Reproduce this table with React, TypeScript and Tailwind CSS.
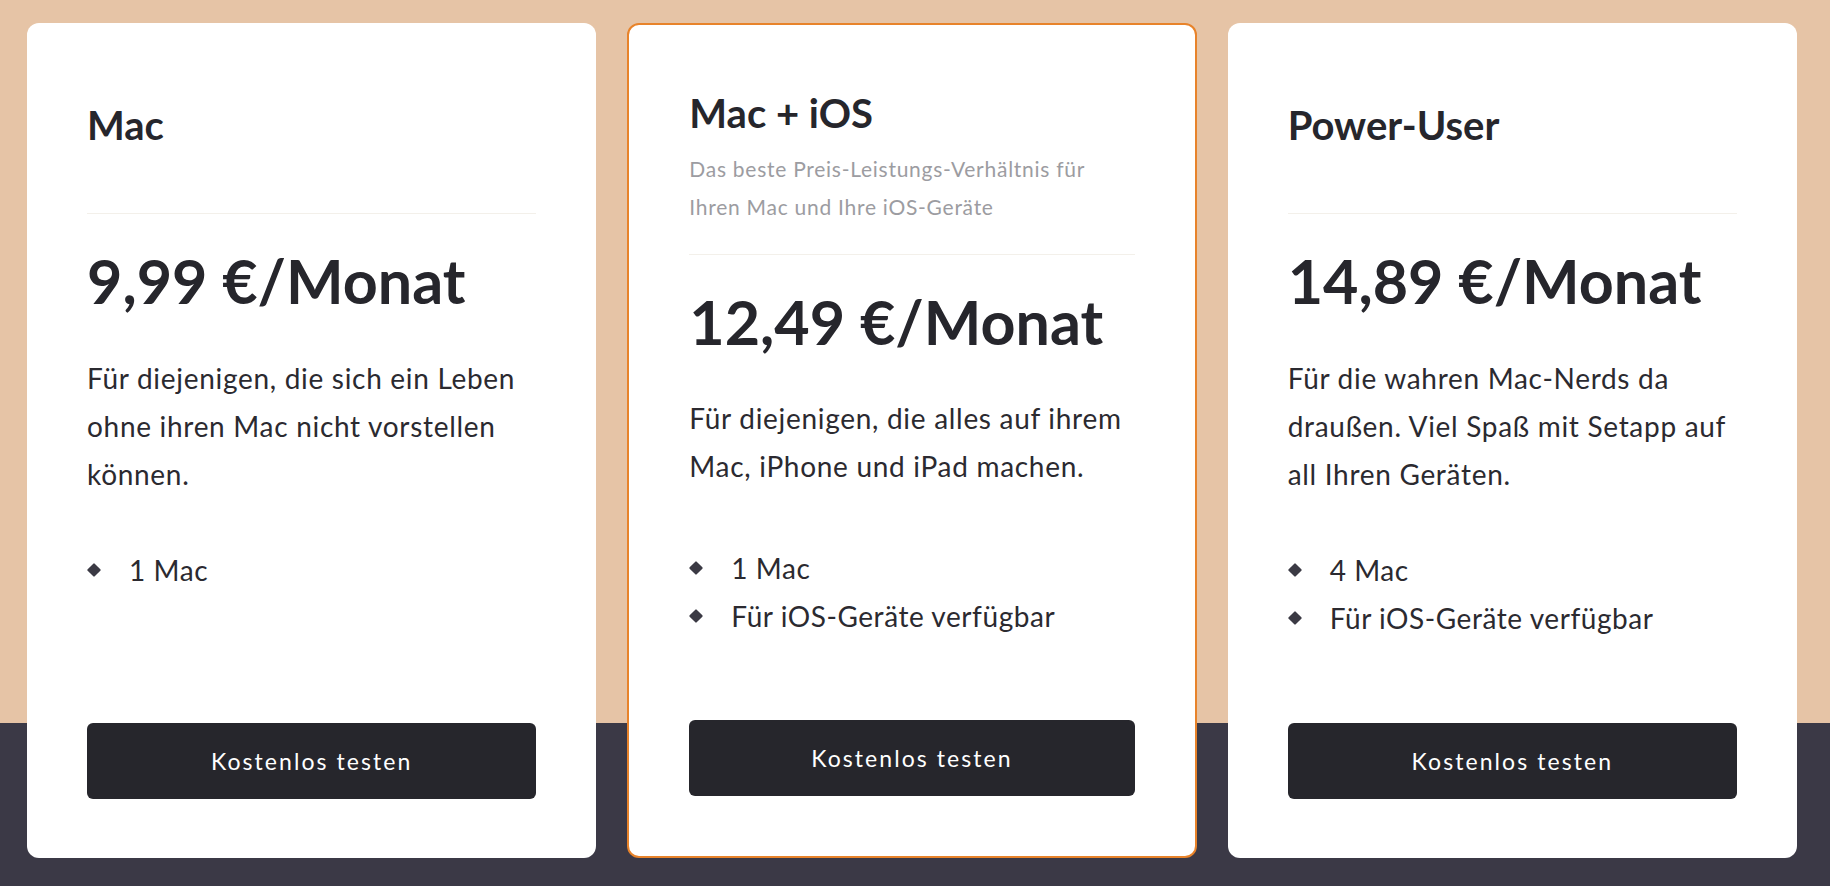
import React from "react";

type Plan = {
  name: string;
  subtitle?: string[];
  price: string;
  desc: string[];
  features: string[];
  featured?: boolean;
};

const plans: Plan[] = [
  {
    name: "Mac",
    price: "9,99 €/Monat",
    desc: ["Für diejenigen, die sich ein Leben", "ohne ihren Mac nicht vorstellen", "können."],
    features: ["1 Mac"],
  },
  {
    name: "Mac + iOS",
    subtitle: ["Das beste Preis-Leistungs-Verhältnis für", "Ihren Mac und Ihre iOS-Geräte"],
    price: "12,49 €/Monat",
    desc: ["Für diejenigen, die alles auf ihrem", "Mac, iPhone und iPad machen."],
    features: ["1 Mac", "Für iOS-Geräte verfügbar"],
    featured: true,
  },
  {
    name: "Power-User",
    price: "14,89 €/Monat",
    desc: ["Für die wahren Mac-Nerds da", "draußen. Viel Spaß mit Setapp auf", "all Ihren Geräten."],
    features: ["4 Mac", "Für iOS-Geräte verfügbar"],
  },
];

function PlanCard({ plan }: { plan: Plan }) {
  const featured = !!plan.featured;
  return (
    <div
      className={`min-w-0 flex flex-col bg-white rounded-[12px] px-[60px] ${
        featured ? "border-2 border-[#e8832a] pt-[64px] pb-[60px]" : "pt-[78px] pb-[59px]"
      }`}
    >
      {/* Header */}
      <div className={`border-b border-[#f3f0ea] ${featured ? "pb-[28px]" : "pb-[64px]"}`}>
        <h3 className="text-[40px] leading-[48px] font-bold text-[#26262c]">{plan.name}</h3>
        {plan.subtitle && (
          <p className="mt-[13px] text-[21px] leading-[38px] tracking-[0.035em] text-[#9c9ca1]">
            {plan.subtitle.map((line) => (
              <span key={line} className="block whitespace-nowrap">
                {line}
              </span>
            ))}
          </p>
        )}
      </div>

      {/* Preis */}
      <div className="mt-[31px] text-[61px] leading-[72px] font-bold text-[#26262c] whitespace-nowrap">
        {plan.price}
      </div>

      {/* Beschreibung */}
      <p
        className={`text-[28px] leading-[48px] tracking-[0.025em] text-[#2b2a30] ${
          featured ? "mt-[36px]" : "mt-[37px]"
        }`}
      >
        {plan.desc.map((line) => (
          <span key={line} className="block whitespace-nowrap">
            {line}
          </span>
        ))}
      </p>

      {/* Features */}
      <ul className={featured ? "mt-[54px]" : "mt-[48px]"}>
        {plan.features.map((f) => (
          <li
            key={f}
            className="flex items-center h-[48px] text-[28px] tracking-[0.02em] text-[#2b2a30]"
          >
            <span className="w-[14px] flex justify-center">
              <span className="w-[10px] h-[10px] rotate-45 bg-[#3b3a44] rounded-[1px]" />
            </span>
            <span className="ml-[28px] whitespace-nowrap">{f}</span>
          </li>
        ))}
      </ul>

      {/* Button */}
      <button className="mt-auto h-[76px] w-full rounded-[6px] bg-[#26262c] text-white text-[23px] tracking-[0.09em]">
        Kostenlos testen
      </button>
    </div>
  );
}

export default function App() {
  return (
    <div
      className="w-[1830px] h-[886px] bg-[linear-gradient(to_bottom,#e6c4a6_723px,#3b3946_723px)] grid grid-cols-3 gap-[31px] pl-[27px] pr-[33px] pt-[23px] pb-[28px]"
      style={{ fontFamily: "Lato, 'Open Sans', sans-serif" }}
    >
      {plans.map((p) => (
        <PlanCard key={p.name} plan={p} />
      ))}
    </div>
  );
}
